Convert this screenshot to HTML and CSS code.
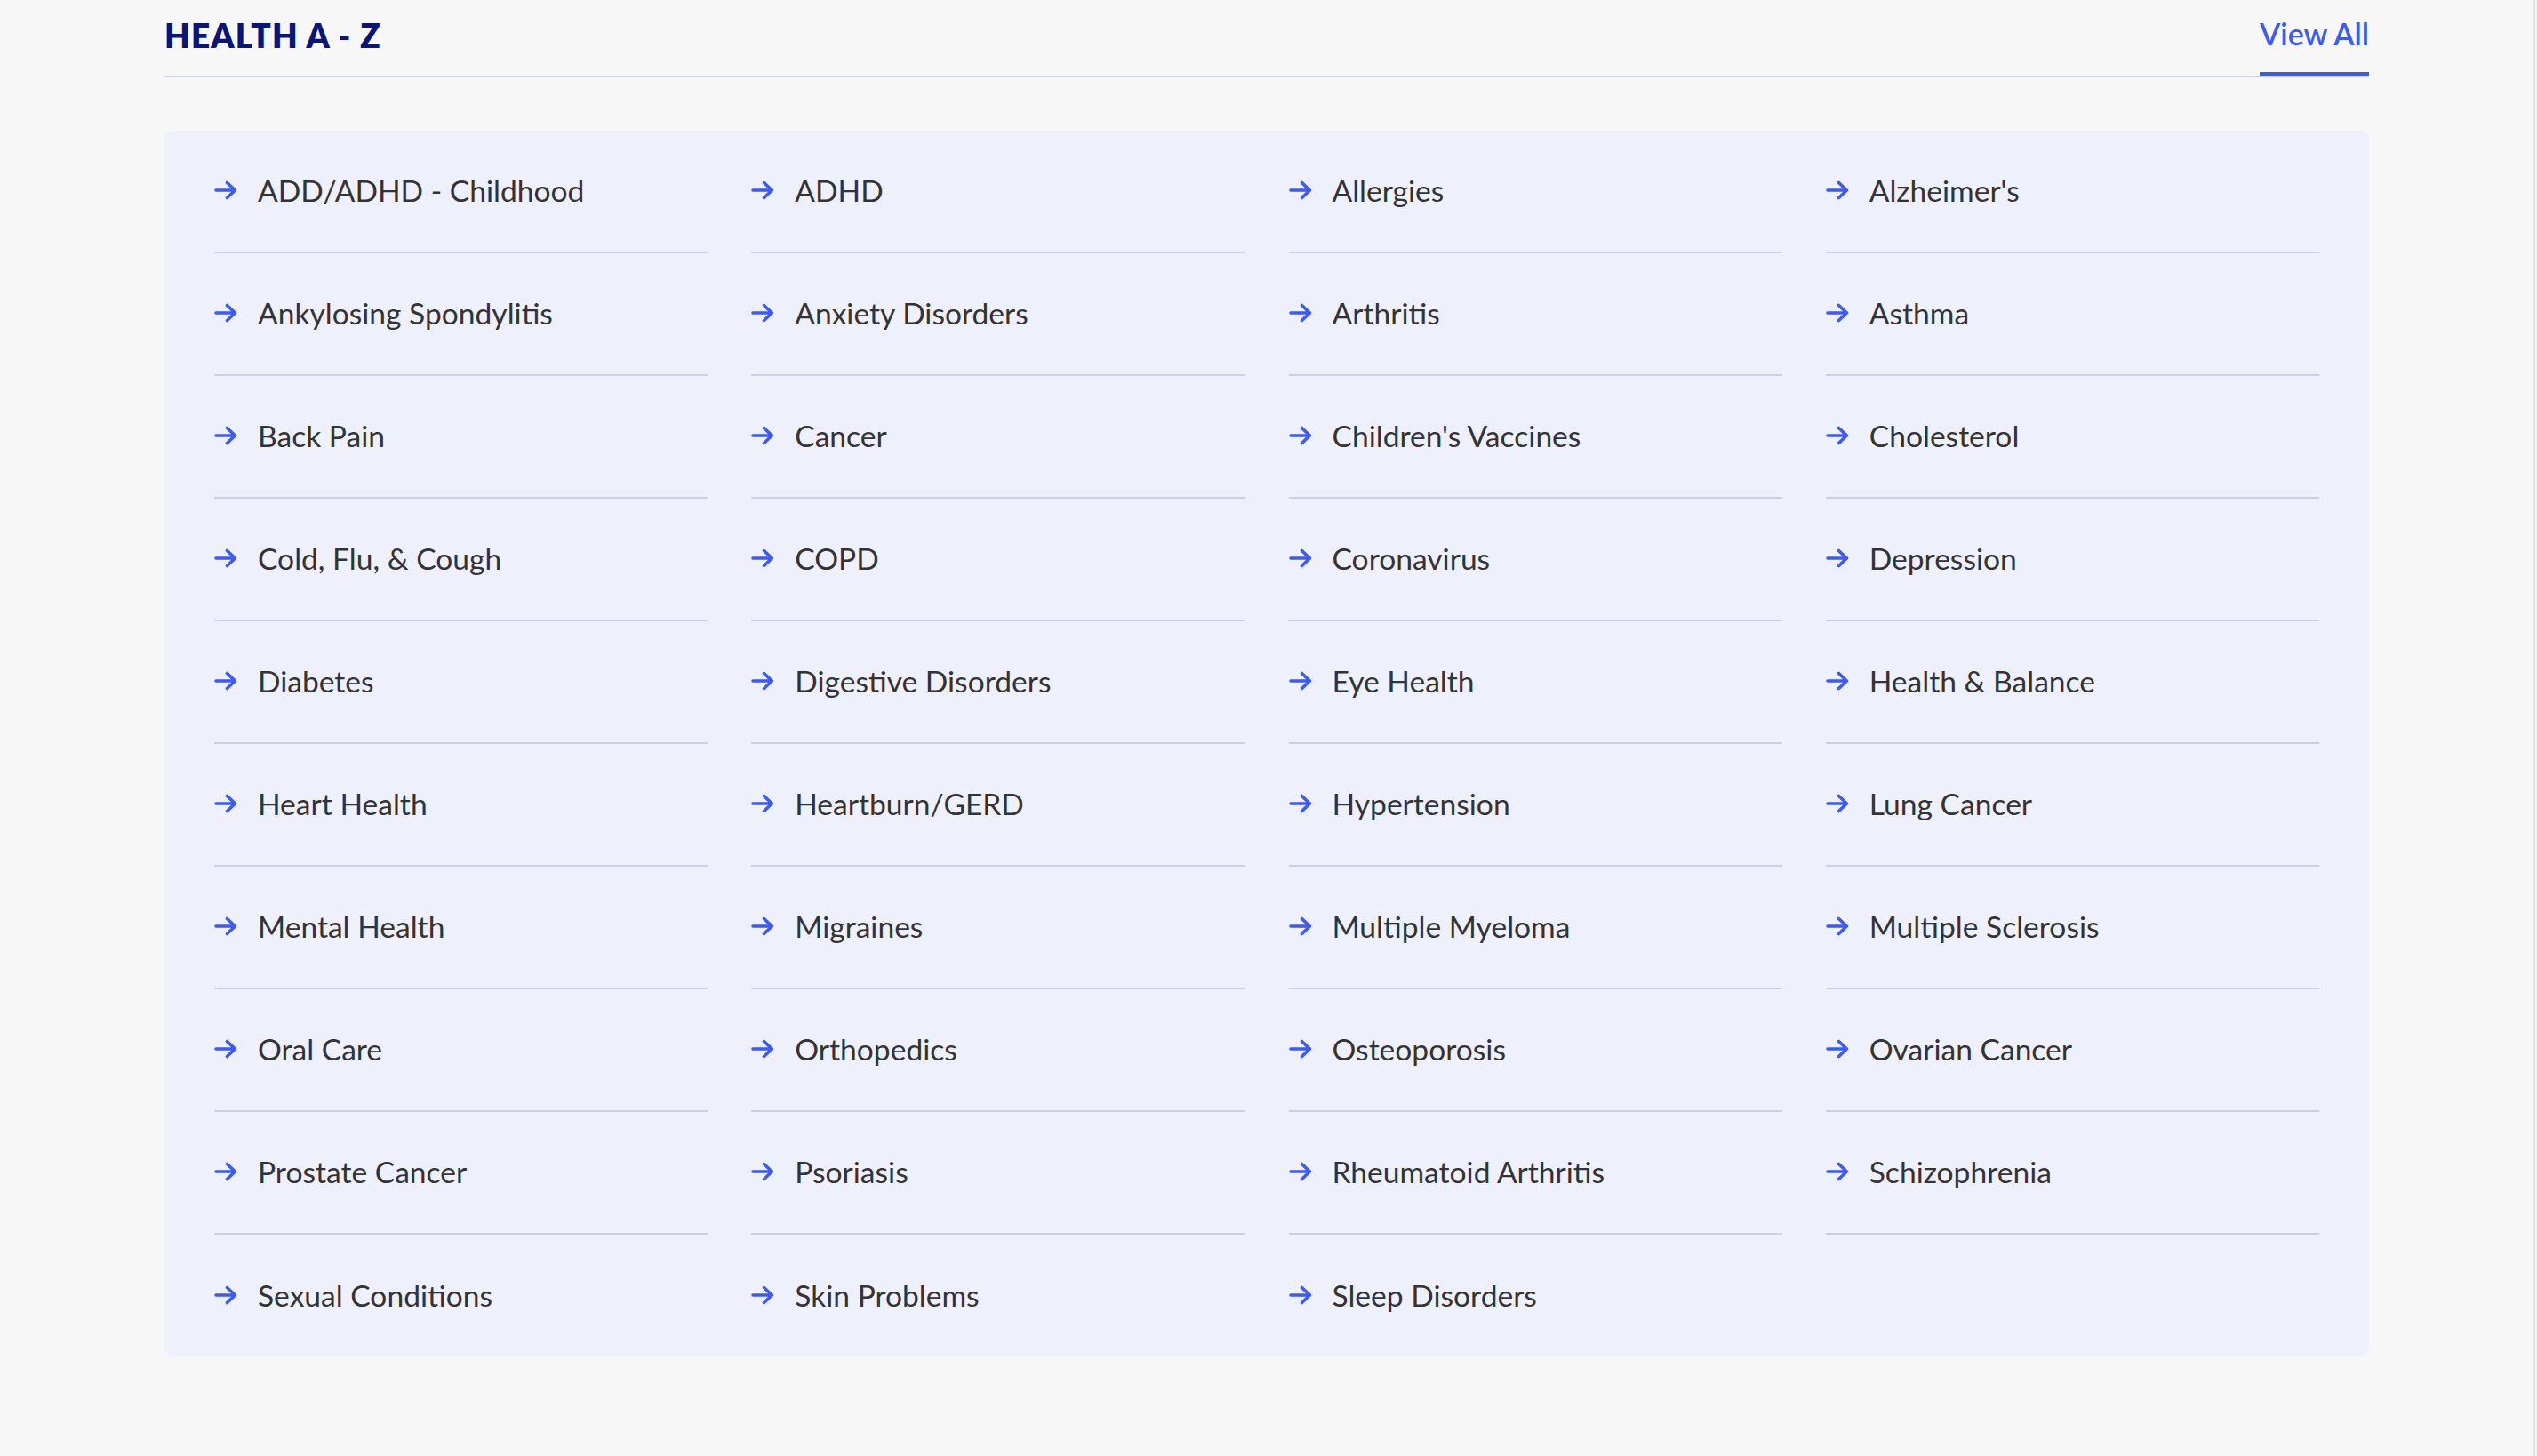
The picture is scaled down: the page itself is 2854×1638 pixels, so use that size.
FILE: index.html
```html
<!DOCTYPE html>
<html lang="en">
<head>
<meta charset="utf-8">
<title>Health A - Z</title>
<link rel="stylesheet" href="styles.css">
</head>
<body>
<div class="page">
  <main class="main">
    <section class="az">
      <header class="az-head">
        <h2 class="az-title">HEALTH A - Z</h2>
        <a class="az-viewall" href="#">View All</a>
      </header>
      <ul class="az-panel">
        <li class="az-item"><svg class="arw" viewBox="0 0 26 22"><path d="M1.5 11H23M14 2.5L23 11L14 19.5"/></svg><span>ADD/ADHD - Childhood</span></li>
        <li class="az-item"><svg class="arw" viewBox="0 0 26 22"><path d="M1.5 11H23M14 2.5L23 11L14 19.5"/></svg><span>ADHD</span></li>
        <li class="az-item"><svg class="arw" viewBox="0 0 26 22"><path d="M1.5 11H23M14 2.5L23 11L14 19.5"/></svg><span>Allergies</span></li>
        <li class="az-item"><svg class="arw" viewBox="0 0 26 22"><path d="M1.5 11H23M14 2.5L23 11L14 19.5"/></svg><span>Alzheimer's</span></li>
        <li class="az-item"><svg class="arw" viewBox="0 0 26 22"><path d="M1.5 11H23M14 2.5L23 11L14 19.5"/></svg><span>Ankylosing Spondylitis</span></li>
        <li class="az-item"><svg class="arw" viewBox="0 0 26 22"><path d="M1.5 11H23M14 2.5L23 11L14 19.5"/></svg><span>Anxiety Disorders</span></li>
        <li class="az-item"><svg class="arw" viewBox="0 0 26 22"><path d="M1.5 11H23M14 2.5L23 11L14 19.5"/></svg><span>Arthritis</span></li>
        <li class="az-item"><svg class="arw" viewBox="0 0 26 22"><path d="M1.5 11H23M14 2.5L23 11L14 19.5"/></svg><span>Asthma</span></li>
        <li class="az-item"><svg class="arw" viewBox="0 0 26 22"><path d="M1.5 11H23M14 2.5L23 11L14 19.5"/></svg><span>Back Pain</span></li>
        <li class="az-item"><svg class="arw" viewBox="0 0 26 22"><path d="M1.5 11H23M14 2.5L23 11L14 19.5"/></svg><span>Cancer</span></li>
        <li class="az-item"><svg class="arw" viewBox="0 0 26 22"><path d="M1.5 11H23M14 2.5L23 11L14 19.5"/></svg><span>Children's Vaccines</span></li>
        <li class="az-item"><svg class="arw" viewBox="0 0 26 22"><path d="M1.5 11H23M14 2.5L23 11L14 19.5"/></svg><span>Cholesterol</span></li>
        <li class="az-item"><svg class="arw" viewBox="0 0 26 22"><path d="M1.5 11H23M14 2.5L23 11L14 19.5"/></svg><span>Cold, Flu, &amp; Cough</span></li>
        <li class="az-item"><svg class="arw" viewBox="0 0 26 22"><path d="M1.5 11H23M14 2.5L23 11L14 19.5"/></svg><span>COPD</span></li>
        <li class="az-item"><svg class="arw" viewBox="0 0 26 22"><path d="M1.5 11H23M14 2.5L23 11L14 19.5"/></svg><span>Coronavirus</span></li>
        <li class="az-item"><svg class="arw" viewBox="0 0 26 22"><path d="M1.5 11H23M14 2.5L23 11L14 19.5"/></svg><span>Depression</span></li>
        <li class="az-item"><svg class="arw" viewBox="0 0 26 22"><path d="M1.5 11H23M14 2.5L23 11L14 19.5"/></svg><span>Diabetes</span></li>
        <li class="az-item"><svg class="arw" viewBox="0 0 26 22"><path d="M1.5 11H23M14 2.5L23 11L14 19.5"/></svg><span>Digestive Disorders</span></li>
        <li class="az-item"><svg class="arw" viewBox="0 0 26 22"><path d="M1.5 11H23M14 2.5L23 11L14 19.5"/></svg><span>Eye Health</span></li>
        <li class="az-item"><svg class="arw" viewBox="0 0 26 22"><path d="M1.5 11H23M14 2.5L23 11L14 19.5"/></svg><span>Health &amp; Balance</span></li>
        <li class="az-item"><svg class="arw" viewBox="0 0 26 22"><path d="M1.5 11H23M14 2.5L23 11L14 19.5"/></svg><span>Heart Health</span></li>
        <li class="az-item"><svg class="arw" viewBox="0 0 26 22"><path d="M1.5 11H23M14 2.5L23 11L14 19.5"/></svg><span>Heartburn/GERD</span></li>
        <li class="az-item"><svg class="arw" viewBox="0 0 26 22"><path d="M1.5 11H23M14 2.5L23 11L14 19.5"/></svg><span>Hypertension</span></li>
        <li class="az-item"><svg class="arw" viewBox="0 0 26 22"><path d="M1.5 11H23M14 2.5L23 11L14 19.5"/></svg><span>Lung Cancer</span></li>
        <li class="az-item"><svg class="arw" viewBox="0 0 26 22"><path d="M1.5 11H23M14 2.5L23 11L14 19.5"/></svg><span>Mental Health</span></li>
        <li class="az-item"><svg class="arw" viewBox="0 0 26 22"><path d="M1.5 11H23M14 2.5L23 11L14 19.5"/></svg><span>Migraines</span></li>
        <li class="az-item"><svg class="arw" viewBox="0 0 26 22"><path d="M1.5 11H23M14 2.5L23 11L14 19.5"/></svg><span>Multiple Myeloma</span></li>
        <li class="az-item"><svg class="arw" viewBox="0 0 26 22"><path d="M1.5 11H23M14 2.5L23 11L14 19.5"/></svg><span>Multiple Sclerosis</span></li>
        <li class="az-item"><svg class="arw" viewBox="0 0 26 22"><path d="M1.5 11H23M14 2.5L23 11L14 19.5"/></svg><span>Oral Care</span></li>
        <li class="az-item"><svg class="arw" viewBox="0 0 26 22"><path d="M1.5 11H23M14 2.5L23 11L14 19.5"/></svg><span>Orthopedics</span></li>
        <li class="az-item"><svg class="arw" viewBox="0 0 26 22"><path d="M1.5 11H23M14 2.5L23 11L14 19.5"/></svg><span>Osteoporosis</span></li>
        <li class="az-item"><svg class="arw" viewBox="0 0 26 22"><path d="M1.5 11H23M14 2.5L23 11L14 19.5"/></svg><span>Ovarian Cancer</span></li>
        <li class="az-item"><svg class="arw" viewBox="0 0 26 22"><path d="M1.5 11H23M14 2.5L23 11L14 19.5"/></svg><span>Prostate Cancer</span></li>
        <li class="az-item"><svg class="arw" viewBox="0 0 26 22"><path d="M1.5 11H23M14 2.5L23 11L14 19.5"/></svg><span>Psoriasis</span></li>
        <li class="az-item"><svg class="arw" viewBox="0 0 26 22"><path d="M1.5 11H23M14 2.5L23 11L14 19.5"/></svg><span>Rheumatoid Arthritis</span></li>
        <li class="az-item"><svg class="arw" viewBox="0 0 26 22"><path d="M1.5 11H23M14 2.5L23 11L14 19.5"/></svg><span>Schizophrenia</span></li>
        <li class="az-item"><svg class="arw" viewBox="0 0 26 22"><path d="M1.5 11H23M14 2.5L23 11L14 19.5"/></svg><span>Sexual Conditions</span></li>
        <li class="az-item"><svg class="arw" viewBox="0 0 26 22"><path d="M1.5 11H23M14 2.5L23 11L14 19.5"/></svg><span>Skin Problems</span></li>
        <li class="az-item"><svg class="arw" viewBox="0 0 26 22"><path d="M1.5 11H23M14 2.5L23 11L14 19.5"/></svg><span>Sleep Disorders</span></li>
      </ul>
    </section>
  </main>
  <div class="scroll-edge"></div>
</div>
</body>
</html>
```

FILE: styles.css
```css
* { box-sizing: border-box; }

html, body {
  margin: 0;
  padding: 0;
  background: #f7f7f7;
}

body {
  font-family: "Lato", "Liberation Sans", sans-serif;
  color: #333333;
}

.page {
  display: flex;
  min-height: 1638px;
}

.main {
  flex: 1;
  display: flex;
  justify-content: center;
}

.scroll-edge {
  width: 4px;
  background: #f3f3f3;
  border-left: 2px solid #e6e6e6;
}

.az {
  width: 2480px;
}

.az-head {
  display: flex;
  justify-content: space-between;
  align-items: flex-end;
  height: 87px;
  border-bottom: 2px solid #cdd0e4;
}

.az-title {
  margin: 0;
  font-size: 37px;
  font-weight: 800;
  letter-spacing: 1.2px;
  color: #0b1577;
  line-height: 1;
  padding-bottom: 27px;
}

.az-viewall {
  font-size: 34px;
  font-weight: 600;
  color: #3d5af1;
  text-decoration: none;
  line-height: 1;
  padding-bottom: 26px;
  border-bottom: 4px solid #3d5af1;
}

.az-panel {
  list-style: none;
  margin: 60px 0 0;
  padding: 0 56px;
  background: #eef0fc;
  border-radius: 9px;
  display: grid;
  grid-template-columns: repeat(4, 1fr);
  column-gap: 49px;
}

.az-item {
  display: flex;
  align-items: center;
  height: 138px;
  border-bottom: 2px solid #cdd0e4;
  padding-bottom: 2px;
  font-size: 33.6px;
  color: #333333;
}

.az-item:nth-child(n+37) {
  border-bottom: none;
  height: 136px;
  padding-bottom: 0;
}

.arw {
  width: 27px;
  height: 22px;
  flex: none;
  margin-right: 22px;
  fill: none;
  stroke: #3d5af1;
  stroke-width: 3.6;
  stroke-linecap: round;
  stroke-linejoin: round;
}
```
